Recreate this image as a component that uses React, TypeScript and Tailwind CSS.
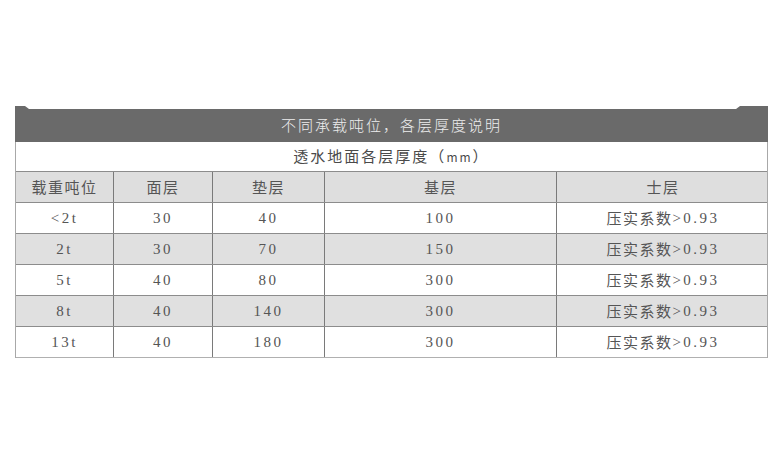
import React from 'react'

const COLS = 'grid grid-cols-[98px_99px_112px_232px_212px]'

const HEAD = ['载重吨位', '面层', '垫层', '基层', '士层']

const ROWS = [
  ['<2t', '30', '40', '100'],
  ['2t', '30', '70', '150'],
  ['5t', '40', '80', '300'],
  ['8t', '40', '140', '300'],
  ['13t', '40', '180', '300'],
]

const cjk = "font-['Noto_Sans_CJK_SC',sans-serif]"
const num = "font-['Liberation_Serif','Noto_Serif_CJK_SC',serif] tracking-[2.5px]"

export default function App() {
  return (
    <div className="h-[468px] w-[780px] bg-white pt-[106px] pl-[15px]">
      <div className="w-[753px]">
        <div
          className={`flex h-[36px] items-end justify-center bg-[#6a6a6a] pb-[6px] text-[15px] font-light tracking-[2px] text-[#eeeeee] [clip-path:polygon(0_0,10px_0,14px_3px,calc(100%-32px)_3px,calc(100%-28px)_0,100%_0,100%_100%,0_100%)] ${cjk}`}
        >
          不同承载吨位，各层厚度说明
        </div>
        <div className="border-x border-[#a8a8a8]">
          <div className={`flex h-[30px] items-center justify-center border-b border-[#8c8c8c] text-[15px] tracking-[2px] text-[#4a4a4a] ${cjk}`}>
            透水地面各层厚度（<span className="text-[12px]">mm</span>）
          </div>
          <div className={`${COLS} h-[31px] border-b border-[#8c8c8c] bg-[#dedede]`}>
            {HEAD.map((h, i) => (
              <div
                key={h}
                className={`flex items-center justify-center text-[15px] tracking-[1.5px] text-[#555] ${cjk} ${i < 4 ? 'border-r border-[#7a7a7a]' : ''}`}
              >
                {h}
              </div>
            ))}
          </div>
          {ROWS.map((r, ri) => (
            <div
              key={r[0]}
              className={`${COLS} h-[31px] border-b ${ri === 4 ? 'border-[#b0b0b0]' : 'border-[#8c8c8c]'} ${ri % 2 === 1 ? 'bg-[#e0e0e0]' : 'bg-white'}`}
            >
              {r.map((c, i) => (
                <div
                  key={i}
                  className={`flex items-center justify-center border-r border-[#7a7a7a] text-[15px] text-[#555] ${num}`}
                >
                  {c}
                </div>
              ))}
              <div className="flex items-center justify-center text-[15px] text-[#555]">
                <span className={cjk + ' tracking-[1.5px]'}>压实系数</span>
                <span className={num}>&gt;0.93</span>
              </div>
            </div>
          ))}
        </div>
      </div>
    </div>
  )
}
